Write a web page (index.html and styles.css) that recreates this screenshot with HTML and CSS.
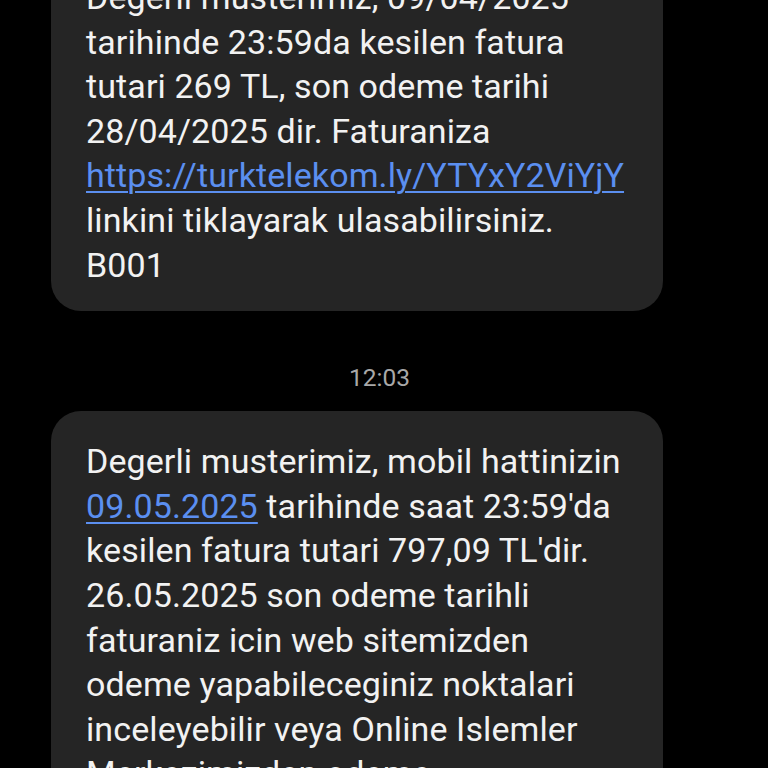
FILE: index.html
```html
<!DOCTYPE html>
<html lang="tr">
<head>
<meta charset="utf-8">
<link rel="stylesheet" href="styles.css">
</head>
<body>
<div class="thread">
  <div class="bubble first">
    <p class="msg">Degerli musterimiz, 09/04/2025<br>tarihinde 23:59da kesilen fatura<br>tutari 269 TL, son odeme tarihi<br>28/04/2025 dir. Faturaniza<br><a class="link" href="#">https://turktelekom.ly/YTYxY2ViYjY</a><br>linkini tiklayarak ulasabilirsiniz.<br>B001</p>
  </div>
  <div class="time">12:03</div>
  <div class="bubble">
    <p class="msg">Degerli musterimiz, mobil hattinizin<br><a class="link" href="#">09.05.2025</a> tarihinde saat 23:59'da<br>kesilen fatura tutari 797,09 TL'dir.<br>26.05.2025 son odeme tarihli<br>faturaniz icin web sitemizden<br>odeme yapabileceginiz noktalari<br>inceleyebilir veya Online Islemler<br>Merkezimizden odeme</p>
  </div>
</div>
</body>
</html>
```
FILE: styles.css
```css
html, body {
  margin: 0;
  padding: 0;
  background: #000;
  height: 768px;
  overflow: hidden;
}
.thread {
  display: flex;
  flex-direction: column;
  align-items: flex-start;
  padding-left: 51px;
  font-family: Roboto, "Noto Sans", sans-serif;
}
.bubble {
  width: 612px;
  box-sizing: border-box;
  background: #252525;
  border-radius: 30px;
  padding: 28px 35px 24px;
}
.bubble.first {
  margin-top: -53px;
}
.msg {
  margin: 0;
  color: #f2f2f2;
  font-size: 34px;
  line-height: 44.6px;
  white-space: nowrap;
  letter-spacing: 0.1px;
}
.link {
  color: #5b8ff0;
  text-decoration: underline;
  text-decoration-thickness: 2px;
  text-underline-offset: 4px;
}
.time {
  width: 657px;
  text-align: center;
  color: #a8a8a8;
  font-size: 24.5px;
  line-height: 30px;
  margin: 52px 0 18px;
}
```
